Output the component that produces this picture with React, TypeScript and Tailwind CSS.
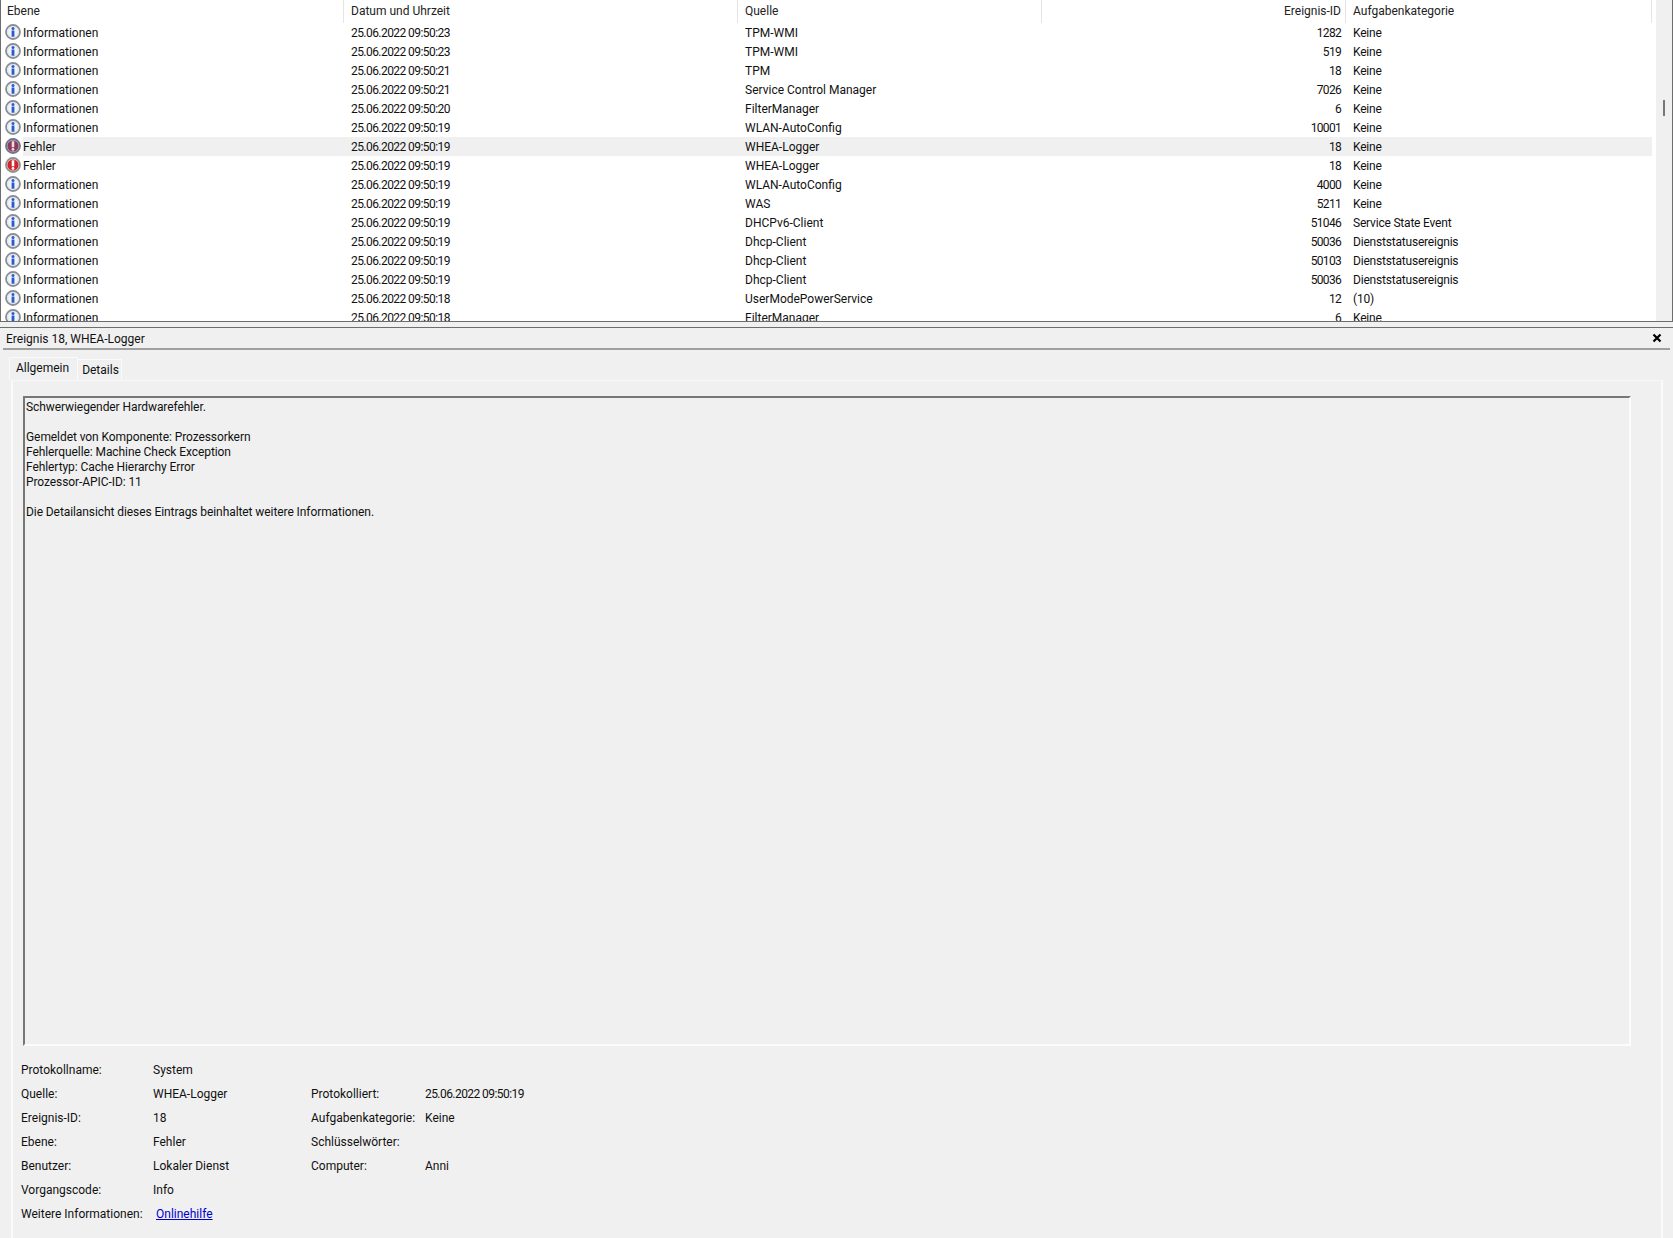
import React from 'react';

type Row = { level: 'info' | 'error'; time: string; source: string; id: string; category: string; selected?: boolean };

const rows: Row[] = [
    { level: 'info', time: '25.06.2022 09:50:23', source: 'TPM-WMI', id: '1282', category: 'Keine' },
    { level: 'info', time: '25.06.2022 09:50:23', source: 'TPM-WMI', id: '519', category: 'Keine' },
    { level: 'info', time: '25.06.2022 09:50:21', source: 'TPM', id: '18', category: 'Keine' },
    { level: 'info', time: '25.06.2022 09:50:21', source: 'Service Control Manager', id: '7026', category: 'Keine' },
    { level: 'info', time: '25.06.2022 09:50:20', source: 'FilterManager', id: '6', category: 'Keine' },
    { level: 'info', time: '25.06.2022 09:50:19', source: 'WLAN-AutoConfig', id: '10001', category: 'Keine' },
    { level: 'error', time: '25.06.2022 09:50:19', source: 'WHEA-Logger', id: '18', category: 'Keine', selected: true },
    { level: 'error', time: '25.06.2022 09:50:19', source: 'WHEA-Logger', id: '18', category: 'Keine' },
    { level: 'info', time: '25.06.2022 09:50:19', source: 'WLAN-AutoConfig', id: '4000', category: 'Keine' },
    { level: 'info', time: '25.06.2022 09:50:19', source: 'WAS', id: '5211', category: 'Keine' },
    { level: 'info', time: '25.06.2022 09:50:19', source: 'DHCPv6-Client', id: '51046', category: 'Service State Event' },
    { level: 'info', time: '25.06.2022 09:50:19', source: 'Dhcp-Client', id: '50036', category: 'Dienststatusereignis' },
    { level: 'info', time: '25.06.2022 09:50:19', source: 'Dhcp-Client', id: '50103', category: 'Dienststatusereignis' },
    { level: 'info', time: '25.06.2022 09:50:19', source: 'Dhcp-Client', id: '50036', category: 'Dienststatusereignis' },
    { level: 'info', time: '25.06.2022 09:50:18', source: 'UserModePowerService', id: '12', category: '(10)' },
    { level: 'info', time: '25.06.2022 09:50:18', source: 'FilterManager', id: '6', category: 'Keine' },
];

const InfoIcon: React.FC = () => (
    <svg width="16" height="16" viewBox="0 0 16 16" className="shrink-0">
        <circle cx="8" cy="8" r="7" fill="#ffffff" stroke="#8a8f97" strokeWidth="1.8" />
        <circle cx="8" cy="8" r="5.4" fill="#f1f4fb" stroke="#d5d9e2" strokeWidth="0.8" />
        <circle cx="8" cy="4.4" r="1.5" fill="#2a5cc6" />
        <rect x="6.6" y="6.5" width="2.8" height="6.2" fill="#2a5cc6" />
    </svg>
);

const ErrorIcon: React.FC<{ selected?: boolean }> = ({ selected }) => (
    <svg width="16" height="16" viewBox="0 0 16 16" className="shrink-0">
        <circle cx="8" cy="8" r="7" fill={selected ? '#c6c8d4' : '#e4e4e4'} stroke={selected ? '#70748a' : '#8f8f8f'} strokeWidth="1.8" />
        <circle cx="8" cy="8" r="5.6" fill={selected ? '#8c3a58' : '#d2232a'} />
        <rect x="6.7" y="3.3" width="2.6" height="6" fill={selected ? '#e6dfe6' : '#ffffff'} />
        <circle cx="8" cy="11.4" r="1.4" fill={selected ? '#e6dfe6' : '#ffffff'} />
    </svg>
);

const Field: React.FC<{ label: string; value?: string; label2?: string; value2?: string; narrowValue2?: boolean }> = ({ label, value, label2, value2, narrowValue2 }) => (
    <div className="flex h-6 items-center">
        <span className="w-[132px]">{label}</span>
        <span className="w-[158px]">{value}</span>
        <span className="w-[114px]">{label2}</span>
        <span className={narrowValue2 ? 'tracking-[-0.56px]' : ''}>{value2}</span>
    </div>
);

const App: React.FC = () => {
    return (
        <div className="h-[1238px] w-[1673px] overflow-hidden bg-[#f0f0f0] text-[12px] leading-[15px] text-[#111111]" style={{ fontFamily: 'Roboto, sans-serif' }}>
            {/* Event list */}
            <div className="flex h-[322px] overflow-hidden border-b border-l border-r border-[#6d6d6d] bg-white">
                <div className="min-w-0 flex-1">
                    <div className="grid h-[23px] grid-cols-[343px_394px_304px_304px_306px] items-center text-[#222222]">
                        <div className="h-full border-r border-[#e5e5e5] pl-[6px] leading-[23px]">Ebene</div>
                        <div className="h-full border-r border-[#e5e5e5] pl-[7px] leading-[23px]">Datum und Uhrzeit</div>
                        <div className="h-full border-r border-[#e5e5e5] pl-[7px] leading-[23px]">Quelle</div>
                        <div className="h-full border-r border-[#e5e5e5] pr-[4px] text-right leading-[23px]">Ereignis-ID</div>
                        <div className="h-full border-r border-[#e5e5e5] pl-[7px] leading-[23px]">Aufgabenkategorie</div>
                    </div>
                    {rows.map((row, i) => (
                        <div key={i} className="grid h-[19px] grid-cols-[343px_394px_304px_304px_306px] grid-rows-[19px] items-center">
                            <div className="flex h-full items-center">
                                <div className="mb-[1px] pl-[4px]">{row.level === 'info' ? <InfoIcon /> : <ErrorIcon selected={row.selected} />}</div>
                                <span className={`ml-[2px] h-full flex-1 leading-[21px] ${row.selected ? 'bg-[#f0f0f0]' : ''}`}>{row.level === 'info' ? 'Informationen' : 'Fehler'}</span>
                            </div>
                            <div className={`h-full pl-[7px] leading-[21px] tracking-[-0.56px] ${row.selected ? 'bg-[#f0f0f0]' : ''}`}>{row.time}</div>
                            <div className={`h-full pl-[7px] leading-[21px] ${row.selected ? 'bg-[#f0f0f0]' : ''}`}>{row.source}</div>
                            <div className={`h-full pr-[5px] text-right leading-[21px] tracking-[-0.7px] ${row.selected ? 'bg-[#f0f0f0]' : ''}`}>{row.id}</div>
                            <div className={`h-full pl-[7px] leading-[21px] tracking-[-0.2px] ${row.selected ? 'bg-[#f0f0f0]' : ''}`}>{row.category}</div>
                        </div>
                    ))}
                </div>
                <div className="flex w-[16px] shrink-0 justify-center bg-[#f0f0f0] pt-[100px]">
                    <div className="h-[16px] w-[2px] bg-[#777777]" />
                </div>
            </div>

            {/* Detail panel header */}
            <div className="mt-[5px] border-t border-[#6d6d6d]">
                <div className="mx-[3px] flex h-[22px] items-center justify-between border-b-2 border-[#a0a0a0] pl-[3px] pr-[8px] pt-[2px]">
                    <span>Ereignis 18, WHEA-Logger</span>
                    <svg width="10" height="10" viewBox="0 0 10 10" className="-mt-[2px]">
                        <path d="M1.5 1.5 L8.5 8.5 M8.5 1.5 L1.5 8.5" stroke="#000000" strokeWidth="2.2" />
                    </svg>
                </div>
            </div>

            {/* Tabs */}
            <div className="ml-[9px] mt-[7px] flex h-[23px] items-end">
                <div className="flex h-[23px] w-[69px] items-center justify-center border-l border-r border-t border-[#fafafa] pb-[2px] pr-[2px]">Allgemein</div>
                <div className="flex h-[21px] w-[44px] items-center justify-center border-r border-t border-[#fafafa] pl-[2px]">Details</div>
            </div>

            <div className="ml-[11px] mr-[10px] h-[900px] border-l-2 border-r-2 border-t border-l-[#fafafa] border-r-[#fafafa] border-t-[#f8f8f8] pl-[10px] pr-[30px] pt-[15px]">
                <div className="h-[650px] border-b-2 border-l-2 border-r-2 border-t-2 border-b-[#fcfcfc] border-l-[#777777] border-r-[#fcfcfc] border-t-[#777777] pl-[1px] pt-[2px] tracking-[-0.08px]">
                    <p>Schwerwiegender Hardwarefehler.</p>
                    <p className="mt-[15px]">Gemeldet von Komponente: Prozessorkern</p>
                    <p>Fehlerquelle: Machine Check Exception</p>
                    <p>Fehlertyp: Cache Hierarchy Error</p>
                    <p>Prozessor-APIC-ID: 11</p>
                    <p className="mt-[15px]">Die Detailansicht dieses Eintrags beinhaltet weitere Informationen.</p>
                </div>
                <div className="-ml-[2px] mt-[12px]">
                    <Field label="Protokollname:" value="System" />
                    <Field label="Quelle:" value="WHEA-Logger" label2="Protokolliert:" value2="25.06.2022 09:50:19" narrowValue2 />
                    <Field label="Ereignis-ID:" value="18" label2="Aufgabenkategorie:" value2="Keine" />
                    <Field label="Ebene:" value="Fehler" label2="Schlüsselwörter:" />
                    <Field label="Benutzer:" value="Lokaler Dienst" label2="Computer:" value2="Anni" />
                    <Field label="Vorgangscode:" value="Info" />
                    <div className="flex h-6 items-center">
                        <span className="w-[135px]">Weitere Informationen:</span>
                        <a className="text-[#0000cc] underline">Onlinehilfe</a>
                    </div>
                </div>
            </div>
        </div>
    );
};

export default App;
